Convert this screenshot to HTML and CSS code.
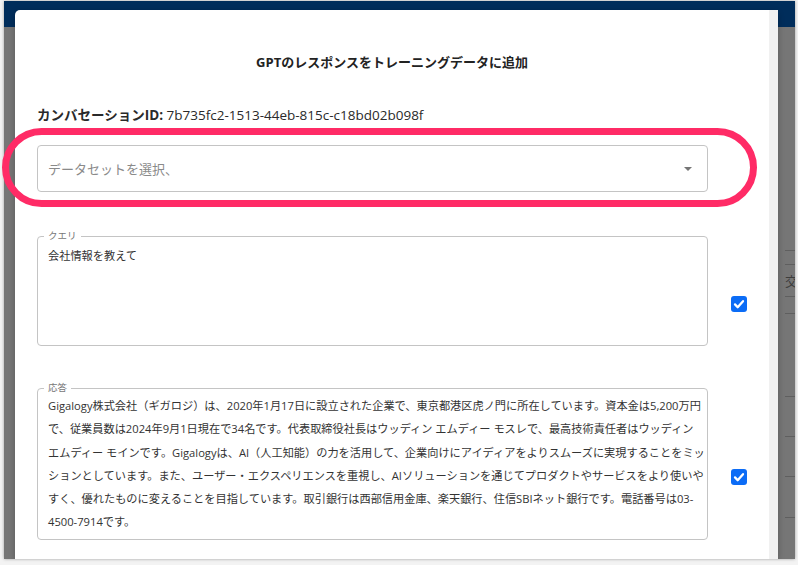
FILE: index.html
```html
<!DOCTYPE html>
<html lang="ja">
<head>
<meta charset="utf-8">
<title>GPTのレスポンスをトレーニングデータに追加</title>
<link rel="stylesheet" href="styles.css">
</head>
<body>
<div class="window">
  <div class="appbar"></div>
  <div class="behind">
    <div class="behind-row r1"></div>
    <div class="behind-row r2"></div>
    <div class="behind-row r3"><span class="behind-text">交</span></div>
    <div class="behind-row r4"></div>
    <div class="behind-row r5"></div>
    <div class="behind-row r6"></div>
    <div class="behind-row r7"></div>
    <div class="behind-row r8"></div>
  </div>
  <div class="dialog">
    <div class="dialog-body">
      <h2 class="title">GPTのレスポンスをトレーニングデータに追加</h2>
      <p class="conv"><b>カンバセーションID:</b> 7b735fc2-1513-44eb-815c-c18bd02b098f</p>
      <div class="select">
        <span class="placeholder">データセットを選択、</span>
        <svg class="arrow" width="8" height="4" viewBox="0 0 8 4"><path d="M0 0h8L4 4z" fill="#757575"/></svg>
      </div>
      <div class="item-row">
        <div class="field-wrap">
          <fieldset class="field">
            <legend>クエリ</legend>
            <div class="field-text query">会社情報を教えて</div>
          </fieldset>
        </div>
        <svg class="checkbox" width="16" height="16" viewBox="0 0 16 16"><rect width="16" height="16" rx="3" fill="#0b6cf6"/><path d="M4 8.4l2.7 2.8L12 5.2" fill="none" stroke="#fff" stroke-width="2.3" stroke-linecap="round" stroke-linejoin="round"/></svg>
      </div>
      <div class="item-row second">
        <div class="field-wrap">
          <fieldset class="field">
            <legend>応答</legend>
            <div class="field-text answer">
              <span class="line">Gigalogy株式会社（ギガロジ）は、2020年1月17日に設立された企業で、東京都港区虎ノ門に所在しています。資本金は5,200万円</span>
              <span class="line">で、従業員数は2024年9月1日現在で34名です。代表取締役社長はウッディン エムディー モスレで、最高技術責任者はウッディン</span>
              <span class="line">エムディー モインです。Gigalogyは、AI（人工知能）の力を活用して、企業向けにアイディアをよりスムーズに実現することをミッ</span>
              <span class="line">ションとしています。また、ユーザー・エクスペリエンスを重視し、AIソリューションを通じてプロダクトやサービスをより使いや</span>
              <span class="line">すく、優れたものに変えることを目指しています。取引銀行は西部信用金庫、楽天銀行、住信SBIネット銀行です。電話番号は03-</span>
              <span class="line">4500-7914です。</span>
            </div>
          </fieldset>
        </div>
        <svg class="checkbox" width="16" height="16" viewBox="0 0 16 16"><rect width="16" height="16" rx="3" fill="#0b6cf6"/><path d="M4 8.4l2.7 2.8L12 5.2" fill="none" stroke="#fff" stroke-width="2.3" stroke-linecap="round" stroke-linejoin="round"/></svg>
      </div>
    </div>
    <div class="scrollbar"></div>
  </div>
</div>
<div class="highlight"></div>
</body>
</html>
```
FILE: styles.css
```css
* { box-sizing: border-box; }
html, body { margin: 0; padding: 0; }
body {
  width: 798px;
  height: 565px;
  background: #f3f3f3;
  font-family: "Open Sans", "Noto Sans CJK JP", sans-serif;
  color: #333;
  overflow: hidden;
}
.window {
  position: relative;
  margin: 1px 0 0 4px;
  width: 791px;
  height: 558px;
  background: #767676;
  overflow: hidden;
  box-shadow: 0 0 3px rgba(0,0,0,0.35);
}
.appbar {
  height: 26px;
  background: #002d5b;
}
.behind {
  margin-left: 781px;
  display: flex;
  flex-direction: column;
}
.behind-row {
  border-bottom: 1px solid #5f5f5f;
  position: relative;
}
.r1 { height: 224px; }
.r2 { height: 14px; }
.r3 { height: 32px; }
.r4 { height: 17px; }
.r5 { height: 83px; }
.r6 { height: 40px; }
.r7 { height: 40px; }
.r8 { height: 41px; }
.behind-text {
  position: absolute;
  left: 0;
  top: 8px;
  font-size: 13px;
  line-height: 16px;
  color: #3d3d3d;
}
.dialog {
  position: absolute;
  left: 11px;
  top: 9px;
  width: 763px;
  bottom: 0;
  background: #fff;
  border-radius: 5px 5px 0 0;
  display: flex;
  box-shadow: 0 2px 6px rgba(0,0,0,0.25);
}
.dialog-body {
  flex: 1;
  padding: 42px 22px 0;
}
.scrollbar {
  width: 9px;
  background: #f1f1f1;
}
.title {
  margin: 0;
  font-size: 13px;
  line-height: 20px;
  font-weight: 700;
  text-align: center;
  color: #222;
}
.conv {
  margin: 33px 0 0;
  font-size: 13.5px;
  line-height: 20px;
  color: #2a2a2a;
}
.conv b { font-weight: 700; }
.select {
  margin-top: 20px;
  width: 671px;
  height: 47px;
  border: 1px solid #c4c4c4;
  border-radius: 4px;
  padding: 0 15px 0 10px;
  display: flex;
  align-items: center;
  justify-content: space-between;
}
.placeholder {
  font-size: 13px;
  color: #8a8a8a;
}
.arrow { display: block; }
.item-row {
  margin-top: 38px;
  display: flex;
  align-items: center;
  gap: 23px;
}
.item-row.second { margin-top: 5px; }
.field-wrap { padding-bottom: 31px; }
.field {
  margin: 0;
  width: 671px;
  min-width: 0;
  padding: 0 10px 6px;
  border: 1px solid #c4c4c4;
  border-radius: 4px;
}
.field legend {
  font-size: 9.5px;
  line-height: 12px;
  padding: 0 4px;
  margin-left: -4px;
  color: #777;
}
.field-text {
  font-size: 11.2px;
  color: #333;
}
.query {
  height: 97px;
  padding-top: 4px;
  line-height: 20px;
}
.answer {
  height: 139px;
  line-height: 23.3px;
}
.line {
  display: block;
  white-space: nowrap;
}
.checkbox { display: block; flex: none; }
.highlight {
  position: absolute;
  left: 2px;
  top: 128px;
  width: 755px;
  height: 79px;
  border: 7px solid #ff2b66;
  border-radius: 40px;
}
```
